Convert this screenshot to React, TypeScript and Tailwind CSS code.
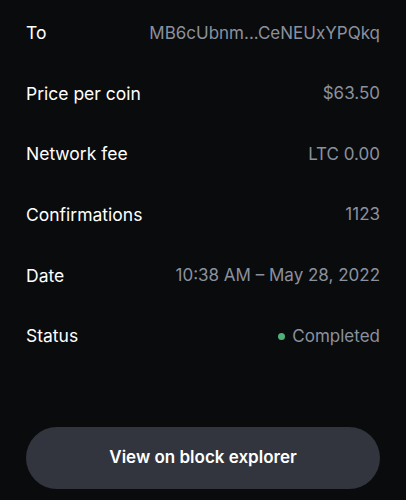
const rows: { label: string; value: string; status?: boolean }[] = [
  { label: "To", value: "MB6cUbnm...CeNEUxYPQkq" },
  { label: "Price per coin", value: "$63.50" },
  { label: "Network fee", value: "LTC 0.00" },
  { label: "Confirmations", value: "1123" },
  { label: "Date", value: "10:38 AM – May 28, 2022" },
  { label: "Status", value: "Completed", status: true },
];

export default function App() {
  return (
    <div
      className="w-[406px] h-[500px] bg-[#0a0b0d] px-[26px] pt-[3px] overflow-hidden"
      style={{ fontFamily: "Inter, 'Liberation Sans', sans-serif" }}
    >
      <div className="flex flex-col">
        {rows.map((r) => (
          <div key={r.label} className="flex h-[60.6px] items-center justify-between">
            <span className="text-[17.5px] text-white">{r.label}</span>
            <span className="flex items-center gap-[7px] text-[17px] text-[#8a919e]">
              {r.status && <span className="h-[7px] w-[7px] rounded-full bg-[#4fb07a]" />}
              {r.value}
            </span>
          </div>
        ))}
      </div>
      <button className="mt-[60px] flex h-[62px] w-full items-center justify-center rounded-full bg-[#32353d] text-[17px] font-semibold text-white">
        View on block explorer
      </button>
    </div>
  );
}
